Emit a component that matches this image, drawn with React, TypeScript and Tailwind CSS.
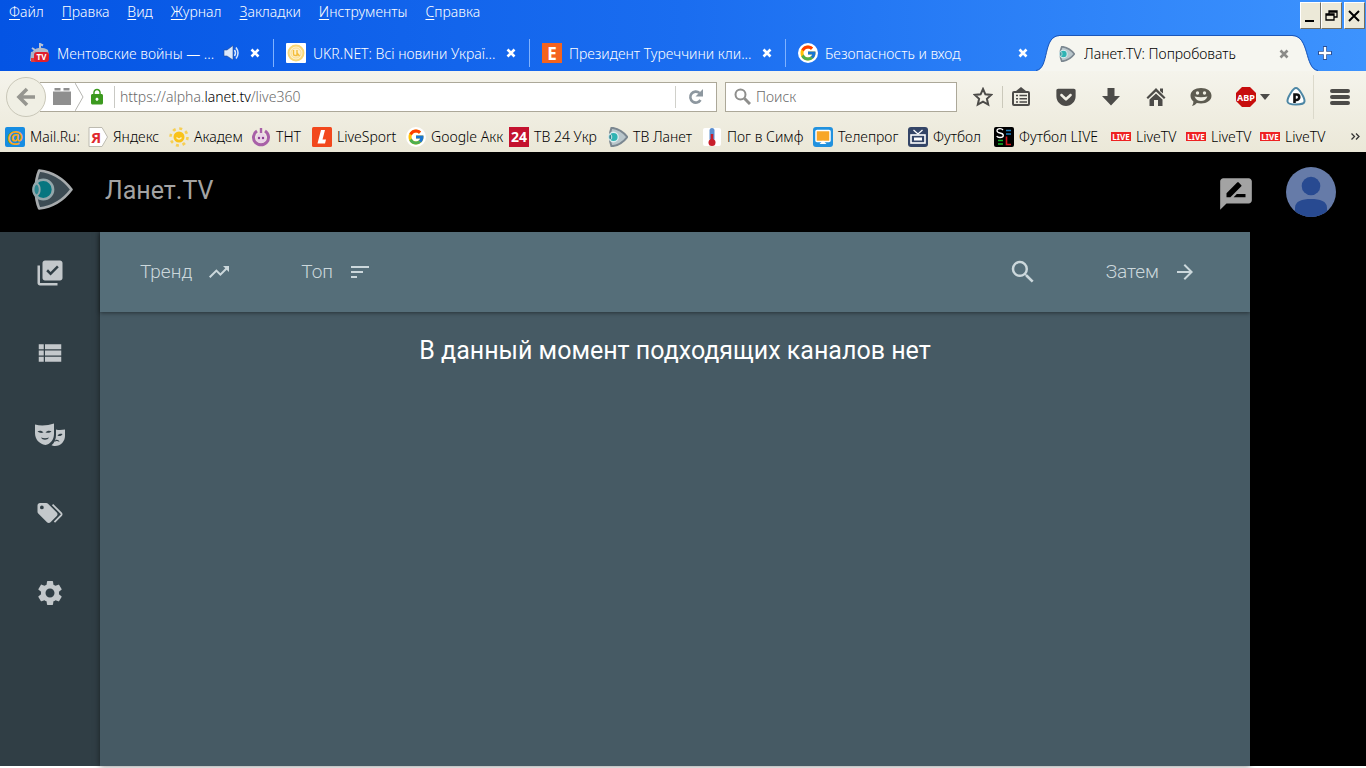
import React from "react";
import {
  MdArrowForward,
  MdLibraryAddCheck,
  MdRateReview,
  MdSearch,
  MdSettings,
  MdSort,
  MdTrendingUp,
  MdViewList,
  MdLock,
} from "react-icons/md";
import { FcGoogle } from "react-icons/fc";
import { FaGetPocket } from "react-icons/fa";

function LanetLogo({ className, dark }: { className: string; dark?: boolean }) {
  const line = dark ? "#a7abad" : "#7b8790";
  return (
    <svg className={className} viewBox="0 0 40 40" aria-hidden="true">
      <path d="M7 1.500 C20 3 31 10 38.500 20 C31 30 20 37 7 38.500 C2.500 28 2.500 12 7 1.500 Z" fill={dark ? "#3d4c54" : "#b9c6cb"} stroke={line} strokeWidth={dark ? "2.600" : "4"} strokeLinejoin="round" />
      <circle cx="11" cy="20" r="9.500" fill={dark ? "#067680" : "#2fb3b3"} stroke={dark ? "#93a7ab" : "#dfeef0"} strokeWidth="2.600" />
      <path d="M4.500 14 C8.500 16 8.500 24 4.500 26 C.5 24 .5 16 4.500 14 Z" fill="#2d8790" stroke={dark ? "#93a7ab" : "#dfeef0"} strokeWidth="1.800" />
    </svg>
  );
}

function Masks() {
  return (
    <svg className="mt-[5px] h-[30px] w-[30px]" viewBox="0 0 30 30" fill="currentColor" aria-hidden="true">
      <path fillRule="evenodd" d="M0 4.500 C6 6.300 13 5.500 19 3.500 V14 C19 19.500 15.500 24 10.500 25 C4 24 0 19 0 13 Z M2.500 11.300 C4.500 13.300 7 13.300 8.500 12.300 C7 10.500 4.500 10.200 2.500 11.300 Z M10.500 12.300 C12.500 13.300 15 13 16.500 11.300 C14.500 10.200 12 10.500 10.500 12.300 Z M6 17.500 C8.500 18.500 11.500 18.500 14 17.500 C12.500 20.500 7.500 20.500 6 17.500 Z" />
      <path fillRule="evenodd" d="M21 9.500 C24 10.300 27 10 30 9.500 V16 C30 21 26 26 20 26 C18.500 26 17.500 25.700 16.500 25.200 C19.500 23 21 19 21 15 Z M22.500 15.500 C24.500 16.700 26.500 16 27.500 14 C25.500 13.500 23.500 14 22.500 15.500 Z M19.500 22 C21 20.800 22.500 20.800 24.500 22 C24 20 22 19.200 20.500 20 Z" />
    </svg>
  );
}

function Tags() {
  return (
    <svg className="h-[30px] w-[30px]" viewBox="0 0 24 24" fill="currentColor" aria-hidden="true">
      <path d="M5.500,9A1.500,1.500 0 0,0 7,7.500A1.500,1.500 0 0,0 5.500,6A1.500,1.500 0 0,0 4,7.500A1.500,1.500 0 0,0 5.500,9M17.410,11.580C17.770,11.940 18,12.440 18,13C18,13.550 17.780,14.050 17.410,14.410L12.410,19.410C12.050,19.770 11.550,20 11,20C10.450,20 9.950,19.780 9.580,19.410L2.590,12.420C2.220,12.050 2,11.550 2,11V6C2,4.890 2.890,4 4,4H9C9.550,4 10.050,4.220 10.410,4.580L17.410,11.580M13.540,5.710L14.540,4.710L21.410,11.580C21.780,11.940 22,12.450 22,13C22,13.550 21.780,14.050 21.420,14.410L16.040,19.790L15.040,18.790L20.750,13L13.540,5.710Z" />
    </svg>
  );
}

function MentTvIcon() {
  return (
    <svg className="h-5 w-5 shrink-0" viewBox="0 0 20 20" aria-hidden="true">
      <path d="M10 5 L10 1 L13 2.500 M5 7 L2 5" stroke="#b9c3d6" strokeWidth="2" fill="none" />
      <path d="M3 8 C7 4 13 4 18 7 L19 12 L1 14 Z" fill="#b3bccb" />
      <path d="M1 9 L6 8 V18 H0 Z" fill="#a9b2c4" />
      <path d="M1 15 H6 V19 H1 Z" fill="#e03c3c" />
      <rect x="4" y="9" width="15" height="10" rx="3" fill="#e01f2b" />
      <text x="11.500" y="17" textAnchor="middle" fontSize="8" fontWeight="700" fill="#fff">TV</text>
    </svg>
  );
}

function UkrNetIcon() {
  return (
    <svg className="h-5 w-5 shrink-0" viewBox="0 0 20 20" aria-hidden="true">
      <rect width="20" height="20" rx="1" fill="#fff" />
      <circle cx="10" cy="10" r="7.500" fill="#fff0c8" stroke="#f8d778" strokeWidth="2" />
      <circle cx="10" cy="10" r="5" fill="none" stroke="#f7dc93" />
      <path d="M7.500 7 V11 Q7.500 12.500 9 12.500 H11 V7 M11 10 L13.500 13" fill="none" stroke="#f3bd3c" strokeWidth="1.400" />
    </svg>
  );
}

function LetterIcon({ letter, className, size }: { letter: string; className: string; size: string }) {
  return (
    <span className={`flex h-5 w-5 shrink-0 items-center justify-center leading-none font-bold ${size} ${className}`}>
      {letter}
    </span>
  );
}

function GoogleIcon() {
  return (
    <span className="flex h-5 w-5 shrink-0 items-center justify-center rounded-full bg-white">
      <FcGoogle className="h-[18px] w-[18px]" />
    </span>
  );
}

function CloseIcon({ className }: { className: string }) {
  return (
    <svg className={`h-[10px] w-[10px] ${className}`} viewBox="0 0 10 10" aria-hidden="true">
      <path d="M1.500 1.500 L8.500 8.500 M8.500 1.500 L1.500 8.500" stroke="currentColor" strokeWidth="2.600" />
    </svg>
  );
}

function SpeakerIcon() {
  return (
    <svg className="h-[18px] w-[18px]" viewBox="0 0 18 18" aria-hidden="true">
      <path d="M1 6 H4 L10 1.500 V16 L4 12 H1 Z" fill="#dce8fb" stroke="#274a8f" strokeWidth=".6" />
      <path d="M11.500 6 Q13.500 9 11.500 12 M13 3.500 Q17 9 13 14.500" stroke="#dce8fb" strokeWidth="1.500" fill="none" />
    </svg>
  );
}

const menu = ["Файл", "Правка", "Вид", "Журнал", "Закладки", "Инструменты", "Справка"];

function MenuBar() {
  return (
    <div className="flex h-[34px] items-start justify-between">
      <nav aria-label="Меню" className="flex gap-[18px] pt-[3px] pl-[9px] text-[14px] leading-[18px] font-light text-white">
        {menu.map((m) => (
          <button key={m} type="button">
            <span className="underline underline-offset-2">{m[0]}</span>
            {m.slice(1)}
          </button>
        ))}
      </nav>
      <div className="flex pt-[2px] pr-px text-black">
        <WindowButton label="Свернуть">
          <path d="M4 18 H13" strokeWidth="2" />
        </WindowButton>
        <WindowButton label="Восстановить">
          <path d="M7 11 V8 H15 V14 H12 M7 9 H15 M4 11 H12 V17 H4 Z M4 12 H12" strokeWidth="1.300" />
        </WindowButton>
        <div className="w-[2px]" />
        <WindowButton label="Закрыть">
          <path d="M4 8 L14 18 M14 8 L4 18" strokeWidth="2" />
        </WindowButton>
      </div>
    </div>
  );
}

function WindowButton({ label, children }: { label: string; children: React.ReactNode }) {
  return (
    <button
      type="button"
      aria-label={label}
      className="h-[27px] w-[21px] border border-t-white border-r-[#716f64] border-b-[#716f64] border-l-white bg-[#ece9d8]"
    >
      <svg className="h-[25px] w-[19px]" viewBox="0 0 19 25" fill="none" stroke="currentColor">
        {children}
      </svg>
    </button>
  );
}

function Tab({ icon, title, sound, last }: { icon: React.ReactNode; title: string; sound?: boolean; last?: boolean }) {
  return (
    <div className={`flex h-7 min-w-0 flex-1 items-center border-r pr-[9px] pl-3 text-white ${last ? "border-transparent" : "border-[#7fb2ff]"}`}>
      {icon}
      <span className="ml-[7px] flex-1 truncate">{title}</span>
      {sound && (
        <button type="button" aria-label="Выключить звук" className="mr-[9px]">
          <SpeakerIcon />
        </button>
      )}
      <button type="button" aria-label="Закрыть вкладку" className="mr-1">
        <CloseIcon className="text-white" />
      </button>
    </div>
  );
}

function TabBar() {
  return (
    <div className="flex h-[37px] items-end text-[14px] font-light">
      <div className="flex min-w-0 flex-1 items-center self-center pt-px pl-[18px]">
        <Tab icon={<MentTvIcon />} title="Ментовские войны — ..." sound />
        <Tab icon={<UkrNetIcon />} title="UKR.NET: Всі новини Украї..." />
        <Tab icon={<LetterIcon letter="E" size="text-[17px]" className="bg-[#f4631e] text-white" />} title="Президент Туреччини кли..." />
        <Tab icon={<GoogleIcon />} title="Безопасность и вход" last />
      </div>
      <div className="-ml-[6px] flex h-[36px]">
        <svg className="-mr-px h-[36px] w-[24px]" viewBox="0 0 24 36" aria-hidden="true">
          <path d="M0 36 C14 34 6 1 24 1 V36 Z" fill="#f6f6f0" />
          <path d="M0 35.500 C14 33.500 6 .5 24 .5" fill="none" stroke="#1b56b8" />
        </svg>
        <div className="flex w-[234px] items-center border-t border-[#1b56b8] bg-[#f6f6f0] text-black">
          <LanetLogo className="h-[16px] w-[16px]" />
          <span className="ml-[9px] flex-1 truncate">Ланет.TV: Попробовать</span>
          <button type="button" aria-label="Закрыть вкладку" className="mr-1">
            <CloseIcon className="text-[#8b8b88]" />
          </button>
        </div>
        <svg className="-ml-px h-[36px] w-[26px]" viewBox="0 0 26 36" aria-hidden="true">
          <path d="M0 1 C18 1 12 34 26 36 H0 Z" fill="#f6f6f0" />
          <path d="M0 .5 C18 .5 12 33.500 26 35.500" fill="none" stroke="#1b56b8" />
        </svg>
      </div>
      <button type="button" aria-label="Новая вкладка" className="mr-[34px] flex h-[36px] w-[14px] items-center">
        <svg className="h-[14px] w-[14px]" viewBox="0 0 14 14">
          <path d="M7 0 V14 M0 7 H14" stroke="#2a4f95" strokeWidth="4" />
          <path d="M7 1 V13 M1 7 H13" stroke="#fff" strokeWidth="2.400" />
        </svg>
      </button>
    </div>
  );
}

function ToolButton({ label, className, children }: { label: string; className: string; children: React.ReactNode }) {
  return (
    <button type="button" aria-label={label} className={`flex h-6 shrink-0 items-center justify-center text-[#4c4b48] ${className}`}>
      {children}
    </button>
  );
}

function NavBar() {
  return (
    <div className="flex h-[50px] items-center pt-px pl-[6px]">
      <button
        type="button"
        aria-label="Назад"
        className="z-10 flex h-[40px] w-[40px] shrink-0 items-center justify-center rounded-full border border-[#c9c7b8] bg-[#f0efe4] text-[#969690]"
      >
        <svg className="h-5 w-5" viewBox="0 0 20 20" fill="none" stroke="currentColor" strokeWidth="3.600">
          <path d="M19 10 H3 M11 2 L3 10 L11 18" />
        </svg>
      </button>
      <div className="-ml-[6px] flex h-[30px] min-w-0 flex-1 items-center border border-l-0 border-[#aca899] bg-white">
        <svg className="ml-[13px] h-[18px] w-[18px] shrink-0 text-[#8f8f8f]" viewBox="0 0 18 18" fill="currentColor" aria-hidden="true">
          <path d="M0 3.500 H18 V17 H0 Z M1.500 0 H7.500 V2.500 H1.500 Z M10.500 0 H16.500 V2.500 H10.500 Z" />
        </svg>
        <svg className="ml-1 h-[28px] w-[9px] shrink-0" viewBox="0 0 9 28" aria-hidden="true">
          <path d="M0 0 L8 14 L0 28" fill="none" stroke="#b5b5b0" />
        </svg>
        <MdLock className="ml-1 h-[18px] w-[18px] shrink-0 text-[#3c9a1f]" />
        <div className="mr-[5px] ml-2 h-[22px] w-px bg-[#c9c9c4]" />
        <a href="#live360" className="flex-1 truncate text-[14px] font-light text-[#6a6a6a]">
          https://alpha.<span className="text-black">lanet.tv</span>/live360
        </a>
        <div className="h-[22px] w-px bg-[#d0d0ca]" />
        <button type="button" aria-label="Обновить" className="flex w-10 justify-center">
          <svg className="h-4 w-4" viewBox="0 0 16 16" aria-hidden="true">
            <path d="M12.500 11 A5.500 5.500 0 1 1 11.500 4" fill="none" stroke="#8d979f" strokeWidth="2.600" />
            <path d="M15 0 V7.500 H7.500 Z" fill="#8d979f" />
          </svg>
        </button>
      </div>
      <label className="ml-2 flex h-[30px] w-[232px] shrink-0 items-center border border-[#aca899] bg-white pl-2">
        <svg className="h-[17px] w-[17px] shrink-0" viewBox="0 0 17 17" fill="none" stroke="#8e8e8c" aria-hidden="true">
          <circle cx="6.500" cy="6.500" r="5" strokeWidth="2" />
          <path d="M10.500 10.500 L16 16" strokeWidth="3" />
        </svg>
        <input aria-label="Поиск" placeholder="Поиск" className="ml-[5px] min-w-0 flex-1 text-[14px] font-light outline-none placeholder:text-[#6a6a6a]" />
      </label>
      <ToolButton label="Добавить в закладки" className="ml-4 w-5">
        <svg className="h-5 w-5" viewBox="0 0 20 20" fill="none" stroke="currentColor" strokeWidth="2">
          <path d="M10 2 L12.400 7.300 L18.200 7.900 L13.900 11.800 L15.200 17.600 L10 14.600 L4.800 17.600 L6.100 11.800 L1.800 7.900 L7.600 7.300 Z" />
        </svg>
      </ToolButton>
      <div className="ml-[9px] h-[22px] w-px bg-[#cbc9bb]" />
      <ToolButton label="Закладки" className="ml-2 w-5">
        <svg className="h-5 w-5" viewBox="0 0 20 20" fill="none" stroke="currentColor" strokeWidth="2">
          <rect x="2" y="5" width="16" height="13" rx="1" />
          <path d="M5 4 L10 0 L15 4 Z" fill="currentColor" stroke="none" />
          <path d="M5 8.500 H7 M8.500 8.500 H16 M5 11.700 H7 M8.500 11.700 H16 M5 15 H7 M8.500 15 H16" strokeWidth="1.500" />
        </svg>
      </ToolButton>
      <ToolButton label="Pocket" className="ml-[24px] w-[22px]">
        <FaGetPocket className="h-[22px] w-[22px]" />
      </ToolButton>
      <ToolButton label="Загрузки" className="ml-6 w-5">
        <svg className="h-5 w-5" viewBox="0 0 20 20" fill="currentColor">
          <path d="M6.500 1 H13.500 V9 H19 L10 18.500 L1 9 H6.500 Z" />
        </svg>
      </ToolButton>
      <ToolButton label="Домой" className="ml-[25px] w-5">
        <svg className="h-5 w-5" viewBox="0 0 20 20" fill="currentColor">
          <path d="M10 1 L19.500 10.500 L18 12 L10 4.500 L2 12 L.5 10.500 Z M14 1.500 H17 V6.500 L14 4 Z M3.500 12.500 L10 6.500 L16.500 12.500 V19 H12 V13 H8 V19 H3.500 Z" />
        </svg>
      </ToolButton>
      <ToolButton label="Чат" className="ml-6 w-[22px]">
        <svg className="h-5 w-[22px]" viewBox="0 0 22 20">
          <path d="M11 1 C17 1 21.500 4 21.500 8.800 C21.500 13.500 17 16.500 11 16.500 C9.500 16.500 8 16.300 6.800 16 C5.500 17.500 4 18.500 2 19 C3 17.500 3.500 16 3.300 14.300 C1.500 13 .5 11 .5 8.800 C.5 4 5 1 11 1 Z" fill="#5d5b50" />
          <circle cx="7.500" cy="6" r="1.700" fill="#efeee3" />
          <circle cx="14.500" cy="6" r="1.700" fill="#efeee3" />
          <path d="M4.500 9.500 Q11 11 17.500 9.500 Q15.500 14 11 14 Q6.500 14 4.500 9.500" fill="#efeee3" />
        </svg>
      </ToolButton>
      <ToolButton label="Adblock Plus" className="ml-[23px] w-[36px] gap-[4px]">
        <svg className="h-5 w-5" viewBox="0 0 20 20">
          <path d="M6 0 H14 L20 6 V14 L14 20 H6 L0 14 V6 Z" fill="#c70d0d" />
          <text x="10" y="13.500" textAnchor="middle" fontSize="9" fontWeight="700" fill="#fff">ABP</text>
        </svg>
        <svg className="h-[6px] w-[10px]" viewBox="0 0 10 6" fill="currentColor">
          <path d="M0 0 H10 L5 6 Z" />
        </svg>
      </ToolButton>
      <ToolButton label="Пароли" className="ml-[15px] w-5">
        <svg className="h-5 w-5" viewBox="0 0 20 20">
          <path d="M10 1 C13 1 19 11 18.500 14.500 C18 18.500 2 18.500 1.500 14.500 C1 11 7 1 10 1 Z" fill="#fff" stroke="#4d87a5" strokeWidth="2" />
          <path d="M8.500 16 V7.500 H10.500 A2.700 2.700 0 0 1 10.500 13 H8.500" fill="none" stroke="#111" strokeWidth="2.600" />
        </svg>
      </ToolButton>
      <div className="ml-[7px] h-[44px] w-px bg-[#dbd9cb]" />
      <ToolButton label="Открыть меню" className="mr-4 ml-4 w-5">
        <svg className="h-[18px] w-5" viewBox="0 0 20 18" fill="none" stroke="currentColor" strokeWidth="4" strokeLinecap="round">
          <path d="M2 3 H18 M2 9 H18 M2 15 H18" />
        </svg>
      </ToolButton>
    </div>
  );
}

function LiveIcon() {
  return <span className="flex h-[9px] w-5 items-center justify-center bg-[#ee2222] text-[8px] leading-none font-bold text-white">LIVE</span>;
}

const bookmarks: { name: string; width: string; icon: React.ReactNode }[] = [
  { name: "Mail.Ru:", width: "w-[83px]", icon: <LetterIcon letter="@" size="text-[18px]" className="rounded-[2px] bg-[#168de2] text-[#f5a623]" /> },
  { name: "Яндекс", width: "w-[81px]", icon: (
    <svg className="h-5 w-5 shrink-0" viewBox="0 0 20 20">
      <path d="M1 .5 H14 L19.500 10 L14 19.500 H1 Z" fill="#fff" stroke="#bdbbb0" />
      <text x="8" y="15.500" textAnchor="middle" fontSize="15" fontWeight="700" fill="#e0292f">Я</text>
    </svg>) },
  { name: "Академ", width: "w-[82px]", icon: (
    <svg className="h-5 w-5 shrink-0" viewBox="0 0 20 20">
      <circle cx="10" cy="10" r="5.500" fill="#f9c21a" />
      <circle cx="10" cy="10" r="8.500" fill="none" stroke="#f6cf55" strokeWidth="2.600" strokeDasharray="3 3.675" />
      <path d="M7.500 10.500 Q10 13.500 12.500 10.500" fill="none" stroke="#fff3bf" strokeWidth="1.300" />
    </svg>) },
  { name: "ТНТ", width: "w-[61px]", icon: (
    <svg className="h-5 w-5 shrink-0" viewBox="0 0 20 20">
      <path d="M6 4 A7.500 7.500 0 1 0 14 4" fill="none" stroke="#a860a8" strokeWidth="3" />
      <path d="M10 1 V6" stroke="#a860a8" strokeWidth="2.400" />
      <circle cx="10" cy="11" r="5" fill="#ead3e8" />
      <circle cx="8" cy="11" r="1.200" fill="#8d3f90" /><circle cx="12" cy="11" r="1.200" fill="#8d3f90" />
    </svg>) },
  { name: "LiveSport", width: "w-[94px]", icon: (
    <svg className="h-5 w-5 shrink-0" viewBox="0 0 20 20">
      <rect width="20" height="20" rx="1.500" fill="#f2481d" />
      <path d="M9 3 H13 L10.500 12.500 H14 L13 16.500 H5.500 Z" fill="#fff" />
    </svg>) },
  { name: "Google Акк", width: "w-[103px]", icon: <GoogleIcon /> },
  { name: "ТВ 24 Укр", width: "w-[99px]", icon: <LetterIcon letter="24" size="text-[14px]" className="bg-[#c4122f] text-white" /> },
  { name: "ТВ Ланет", width: "w-[94px]", icon: <LanetLogo className="h-5 w-5 shrink-0" /> },
  { name: "Пог в Симф", width: "w-[111px]", icon: (
    <svg className="h-5 w-5 shrink-0" viewBox="0 0 20 20">
      <rect x="1" y="1" width="18" height="18" rx="2" fill="#fff" />
      <rect x="7.500" y="1" width="5" height="13" rx="2.500" fill="#5b8fd0" />
      <path d="M10 7 V15" stroke="#c81e2a" strokeWidth="2.500" />
      <circle cx="10" cy="15.500" r="3.500" fill="#c81e2a" />
    </svg>) },
  { name: "Телепрог", width: "w-[95px]", icon: (
    <svg className="h-5 w-5 shrink-0" viewBox="0 0 20 20">
      <rect width="20" height="20" rx="3" fill="#2191de" />
      <rect x="3" y="3.500" width="14" height="11" rx="1" fill="#f8a628" stroke="#fff" strokeWidth="1.500" />
      <path d="M6.500 17 H13.500 L10 13.500 Z" fill="#fff" />
    </svg>) },
  { name: "Футбол", width: "w-[86px]", icon: (
    <svg className="h-5 w-5 shrink-0" viewBox="0 0 20 20">
      <rect width="20" height="20" rx="3" fill="#344567" />
      <rect x="3" y="8" width="14" height="8" fill="none" stroke="#fff" strokeWidth="1.600" />
      <path d="M5.500 3 L10 7 L14.500 3" fill="none" stroke="#fff" strokeWidth="1.300" />
      <rect x="6" y="10.500" width="8" height="3" fill="#fff" />
    </svg>) },
  { name: "Футбол LIVE", width: "w-[117px]", icon: (
    <svg className="h-5 w-5 shrink-0" viewBox="0 0 20 20">
      <rect width="20" height="20" rx="2" fill="#000" />
      <path d="M9 3 Q8 1.700 6 1.700 Q3 1.700 3 3.800 Q3 5.500 6 6 Q9.300 6.500 9.300 8.500 Q9.300 10.500 6 10.500 Q3.500 10.500 2.700 9" fill="none" stroke="#fff" strokeWidth="1.300" />
      <path d="M12 3.500 H17 M12 7 H17" stroke="#1e7fc0" strokeWidth="1.300" />
      <path d="M4 13.500 H9 M4 17 H9" stroke="#19b52c" strokeWidth="1.600" />
      <path d="M12.500 9.500 V17.500 H17" fill="none" stroke="#d4141c" strokeWidth="1.600" />
    </svg>) },
  { name: "LiveTV", width: "w-[75px]", icon: <LiveIcon /> },
  { name: "LiveTV", width: "w-[74px]", icon: <LiveIcon /> },
  { name: "LiveTV", width: "w-[75px]", icon: <LiveIcon /> },
];

function BookmarksBar() {
  return (
    <div className="flex h-[31px] items-center pl-[5px] text-[14px] font-light text-black">
      {bookmarks.map((b, i) => (
        <a key={i} href="#bookmark" className={`flex h-5 min-w-0 items-center gap-[5px] whitespace-nowrap ${b.width}`}>
          {b.icon}
          {b.name}
        </a>
      ))}
      <button type="button" aria-label="Другие закладки" className="mr-[6px] ml-auto">
        <svg className="h-[7px] w-[9px]" viewBox="0 0 9 7" fill="none" stroke="#333" strokeWidth="1.300">
          <path d="M.5 .5 L3.500 3.500 L.5 6.500 M5 .5 L8 3.500 L5 6.500" />
        </svg>
      </button>
    </div>
  );
}

const sidebar: { label: string; icon: React.ReactNode }[] = [
  { label: "Избранное", icon: <MdLibraryAddCheck className="h-[30px] w-[30px]" /> },
  { label: "Список", icon: <MdViewList className="h-[30px] w-[30px]" /> },
  { label: "Жанры", icon: <Masks /> },
  { label: "Теги", icon: <Tags /> },
  { label: "Настройки", icon: <MdSettings className="h-[30px] w-[30px]" /> },
];

export default function App() {
  return (
    <div className="flex h-screen flex-col bg-white pb-[2px] font-['Noto_Sans',sans-serif]">
      <header className="shrink-0">
        <div className="bg-linear-to-r from-[#0454e4] via-[#1a6df0] to-[#3d93fe]">
          <MenuBar />
          <TabBar />
        </div>
        <div className="bg-linear-to-b from-[#f5f4ec] to-[#ebe8d8]">
          <NavBar />
          <BookmarksBar />
        </div>
      </header>

      <div className="flex min-h-0 flex-1 flex-col bg-black font-['Roboto',sans-serif]">
        <header className="flex h-[80px] shrink-0 items-center pr-[30px] pl-8">
          <LanetLogo className="mb-[5px] h-[41px] w-[41px]" dark />
          <h1 className="mb-[2px] ml-8 flex-1 text-[25px] text-[#a3a3a3]">Ланет.TV</h1>
          <button type="button" aria-label="Оставить отзыв" className="mt-1 text-[#a3a3a3]">
            <MdRateReview className="h-[38px] w-[38px]" />
          </button>
          <button type="button" aria-label="Профиль" className="ml-[31px] overflow-hidden rounded-full">
            <svg className="h-[50px] w-[50px]" viewBox="0 0 50 50">
              <rect width="50" height="50" fill="#667ba8" />
              <circle cx="25" cy="19" r="9.300" fill="#284a91" />
              <path d="M9 50 V41 C9 34 16 32 25 32 C34 32 41 34 41 41 V50 Z" fill="#284a91" />
            </svg>
          </button>
        </header>

        <div className="flex min-h-0 flex-1">
          <nav aria-label="Разделы" className="flex w-[100px] shrink-0 flex-col bg-[#303e45]">
            {sidebar.map((s) => (
              <button key={s.label} type="button" aria-label={s.label} className="flex h-[80px] items-center justify-center pt-px text-[#c3c8cb]">
                {s.icon}
              </button>
            ))}
          </nav>
          <main className="mr-[116px] flex flex-1 flex-col bg-[#465a64] shadow-[0_0_6px_rgba(0,0,0,0.5)]">
            <div className="flex h-[80px] shrink-0 items-center bg-[#556e79] px-10 text-[19px] font-light text-[#ccd8dc] shadow-[0_1px_4px_rgba(0,0,0,0.45)]">
              <button type="button" className="flex items-center gap-[15px]">
                Тренд
                <MdTrendingUp className="h-6 w-6" />
              </button>
              <button type="button" className="ml-[70px] flex items-center gap-[15px]">
                Топ
                <MdSort className="h-6 w-6" />
              </button>
              <button type="button" aria-label="Поиск каналов" className="ml-auto">
                <MdSearch className="h-[30px] w-[30px]" />
              </button>
              <button type="button" className="mr-[13px] ml-[68px] flex items-center gap-[14px]">
                Затем
                <MdArrowForward className="h-6 w-6" />
              </button>
            </div>
            <p className="pt-5 text-center text-[25px] leading-[37px] text-white">В данный момент подходящих каналов нет</p>
          </main>
        </div>
      </div>
    </div>
  );
}
